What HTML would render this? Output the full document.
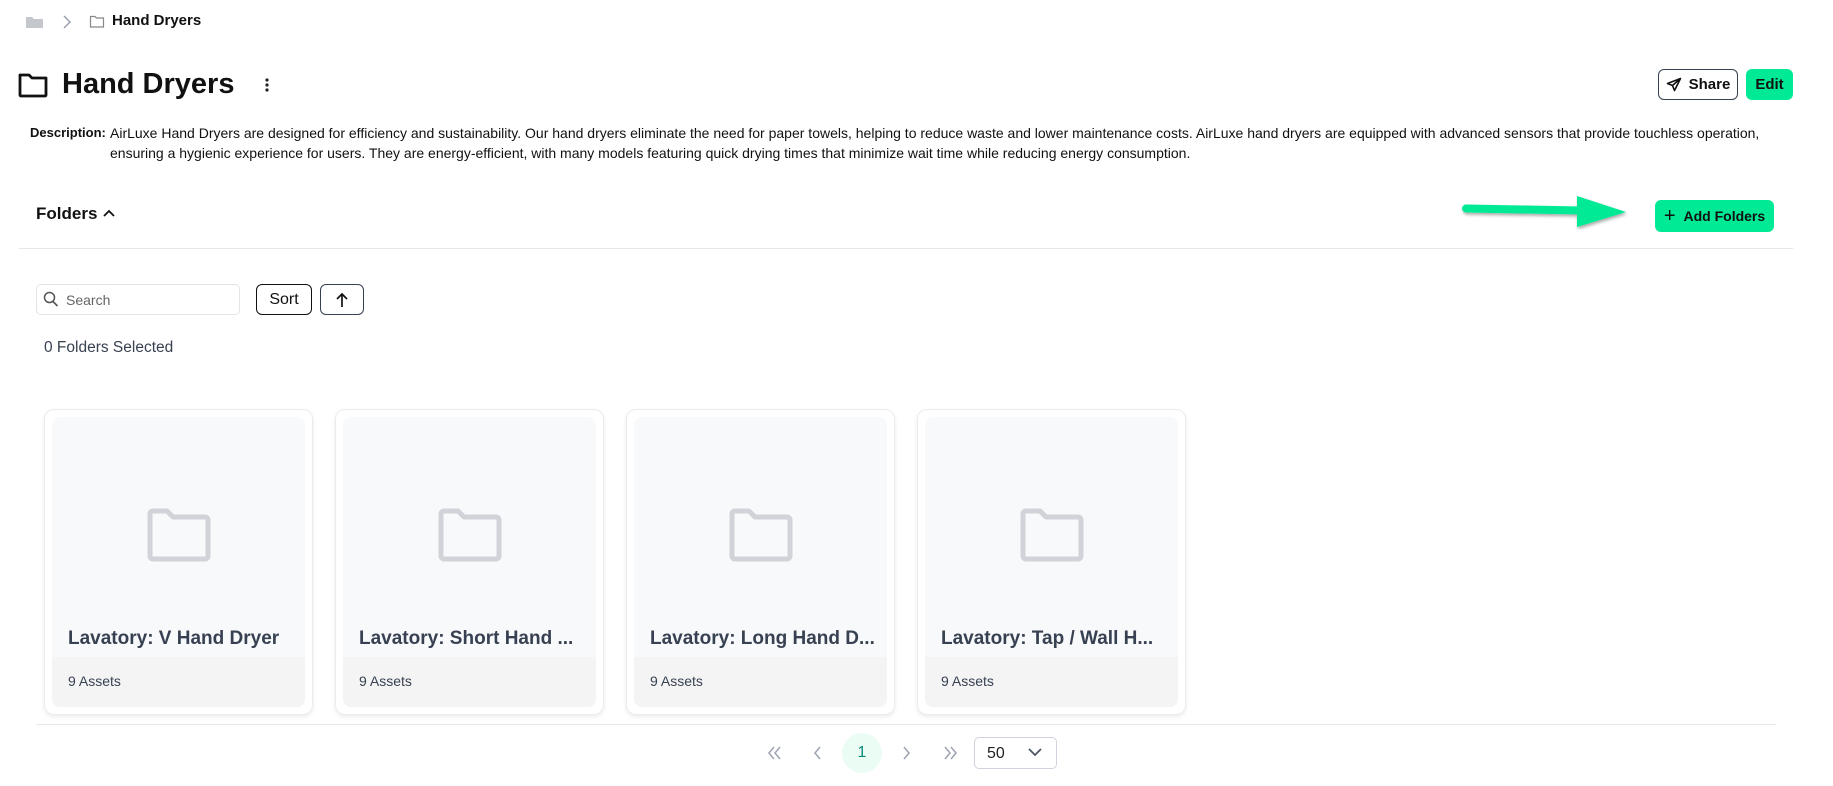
<!DOCTYPE html>
<html><head><meta charset="utf-8"><style>
*{box-sizing:border-box;margin:0;padding:0}
body{width:1833px;height:786px;background:#fff;font-family:"Liberation Sans",sans-serif;color:#111;position:relative;overflow:hidden}
.a{position:absolute}
.btn{position:absolute;border-radius:6px;font-weight:bold;font-size:15px;display:flex;align-items:center;justify-content:center}
.card{position:absolute;top:409px;width:269px;height:306px;background:#fff;border:1px solid #ececec;border-radius:10px;box-shadow:0 2px 4px rgba(0,0,0,.08)}
.in{position:absolute;left:7px;top:7px;right:7px;bottom:7px;border-radius:8px;background:#f8f9fb;overflow:hidden}
.ft{position:absolute;left:0;right:0;bottom:0;height:50px;background:#f4f4f5;font-size:14px;color:#374151;padding:16px 0 0 16px}
.tt{position:absolute;left:16px;top:211px;font-size:19px;font-weight:bold;color:#374151;white-space:nowrap}
.fi{position:absolute;left:94px;top:89px}
</style></head><body>
<svg class="a" style="left:25px;top:14px" width="20" height="16" viewBox="0 0 20 16"><path d="M1 3h6l2 2h9v9H1z" fill="#c4c7cc"/></svg>
<svg class="a" style="left:61px;top:13px" width="12" height="18" viewBox="0 0 12 18"><path d="M3 3l6 6-6 6" fill="none" stroke="#9ca3af" stroke-width="1.5"/></svg>
<svg class="a" style="left:89px;top:14px" width="16" height="15" viewBox="0 0 16 15"><path d="M1.5 2.5h4.5l1.5 1.5h7v9h-13z" fill="none" stroke="#888" stroke-width="1.2"/></svg>
<div class="a" style="left:112px;top:12px;font-size:15px;font-weight:bold">Hand Dryers</div>

<svg class="a" style="left:17px;top:70px" width="32" height="30" viewBox="0 0 32 30"><path d="M3 5h9l3 3h14v17a1 1 0 0 1-1 1H4a1 1 0 0 1-1-1z" fill="none" stroke="#111" stroke-width="2.8" stroke-linejoin="round"/></svg>
<div class="a" style="left:62px;top:68px;font-size:29px;font-weight:bold">Hand Dryers</div>
<svg class="a" style="left:263px;top:77px" width="8" height="16"><circle cx="4" cy="3" r="1.6" fill="#222"/><circle cx="4" cy="8" r="1.6" fill="#222"/><circle cx="4" cy="13" r="1.6" fill="#222"/></svg>

<div class="btn" style="left:1658px;top:69px;width:80px;height:31px;border:1.5px solid #374151;gap:7px"><svg width="16" height="16" viewBox="0 0 16 16"><path d="M14.5 1.5L1.5 6.5l5 2 2 5z M6.5 8.5l8-7" fill="none" stroke="#111" stroke-width="1.6" stroke-linejoin="round"/></svg>Share</div>
<div class="btn" style="left:1746px;top:69px;width:47px;height:31px;background:#00ea96">Edit</div>

<div class="a" style="left:30px;top:123px;font-size:14px;line-height:20px;width:1800px;white-space:nowrap">
<span style="font-weight:bold;position:absolute;left:0;top:0;font-size:13px">Description:</span>
<div style="margin-left:80px">AirLuxe Hand Dryers are designed for efficiency and sustainability. Our hand dryers eliminate the need for paper towels, helping to reduce waste and lower maintenance costs. AirLuxe hand dryers are equipped with advanced sensors that provide touchless operation,<br>ensuring a hygienic experience for users. They are energy-efficient, with many models featuring quick drying times that minimize wait time while reducing energy consumption.</div></div>

<div class="a" style="left:36px;top:204px;font-size:17px;font-weight:bold">Folders</div>
<svg class="a" style="left:102px;top:207px" width="14" height="14" viewBox="0 0 14 14"><path d="M2 9l5-5 5 5" fill="none" stroke="#111" stroke-width="1.8"/></svg>

<svg class="a" style="left:1452px;top:194px" width="180" height="36" viewBox="0 0 180 36"><defs><filter id="s"><feDropShadow dx="1" dy="2" stdDeviation="1.5" flood-opacity=".35"/></filter></defs><g filter="url(#s)"><path d="M14 14.5L130 16.5" stroke="#00ea96" stroke-width="8" stroke-linecap="round"/><path d="M125 2L174 18 125 33z" fill="#00ea96"/></g></svg>
<div class="btn" style="left:1655px;top:200px;width:119px;height:32px;background:#00ea96;font-size:14px;gap:8px"><span style="font-size:20px;font-weight:normal">+</span>Add Folders</div>

<div class="a" style="left:19px;top:248px;width:1774px;height:1px;background:#e5e7eb"></div>

<div class="a" style="left:36px;top:284px;width:204px;height:31px;border:1px solid #e2e4e8;border-radius:5px"></div>
<svg class="a" style="left:43px;top:291px" width="16" height="17" viewBox="0 0 16 17"><circle cx="6.5" cy="6.5" r="5" fill="none" stroke="#555" stroke-width="1.5"/><path d="M10 10.5l4.5 4.5" stroke="#555" stroke-width="1.6"/></svg>
<div class="a" style="left:66px;top:292px;font-size:14px;color:#666">Search</div>
<div class="btn" style="left:256px;top:284px;width:56px;height:31px;border:1.5px solid #111;font-weight:normal;font-size:16px">Sort</div>
<div class="btn" style="left:320px;top:284px;width:44px;height:31px;border:1.5px solid #374151"><svg width="14" height="16" viewBox="0 0 14 16"><path d="M7 15V2M2 7l5-5 5 5" fill="none" stroke="#111" stroke-width="1.7"/></svg></div>
<div class="a" style="left:44px;top:339px;font-size:15.5px;color:#374151">0 Folders Selected</div>

<div class="card" style="left:44px"><div class="in"><svg class="fi" width="66" height="56" viewBox="0 0 66 56"><path d="M4 8a3 3 0 0 1 3-3h14l6 6h32a3 3 0 0 1 3 3v36a3 3 0 0 1-3 3H7a3 3 0 0 1-3-3z" fill="none" stroke="#d1d3d9" stroke-width="5" stroke-linejoin="round"/></svg><div class="tt">Lavatory: V Hand Dryer</div><div class="ft">9 Assets</div></div></div>
<div class="card" style="left:335px"><div class="in"><svg class="fi" width="66" height="56" viewBox="0 0 66 56"><path d="M4 8a3 3 0 0 1 3-3h14l6 6h32a3 3 0 0 1 3 3v36a3 3 0 0 1-3 3H7a3 3 0 0 1-3-3z" fill="none" stroke="#d1d3d9" stroke-width="5" stroke-linejoin="round"/></svg><div class="tt">Lavatory: Short Hand ...</div><div class="ft">9 Assets</div></div></div>
<div class="card" style="left:626px"><div class="in"><svg class="fi" width="66" height="56" viewBox="0 0 66 56"><path d="M4 8a3 3 0 0 1 3-3h14l6 6h32a3 3 0 0 1 3 3v36a3 3 0 0 1-3 3H7a3 3 0 0 1-3-3z" fill="none" stroke="#d1d3d9" stroke-width="5" stroke-linejoin="round"/></svg><div class="tt">Lavatory: Long Hand D...</div><div class="ft">9 Assets</div></div></div>
<div class="card" style="left:917px"><div class="in"><svg class="fi" width="66" height="56" viewBox="0 0 66 56"><path d="M4 8a3 3 0 0 1 3-3h14l6 6h32a3 3 0 0 1 3 3v36a3 3 0 0 1-3 3H7a3 3 0 0 1-3-3z" fill="none" stroke="#d1d3d9" stroke-width="5" stroke-linejoin="round"/></svg><div class="tt">Lavatory: Tap / Wall H...</div><div class="ft">9 Assets</div></div></div>

<div class="a" style="left:36px;top:724px;width:1740px;height:1px;background:#e5e7eb"></div>

<svg class="a" style="left:766px;top:743px" width="300" height="20" viewBox="0 0 300 20">
<path d="M8 4l-5 6 5 6M14 4l-5 6 5 6" fill="none" stroke="#a0a7b3" stroke-width="1.6"/>
<path d="M54 4l-5 6 5 6" fill="none" stroke="#a0a7b3" stroke-width="1.6"/>
<path d="M138 4l5 6-5 6" fill="none" stroke="#a0a7b3" stroke-width="1.6"/>
<path d="M179 4l5 6-5 6M185 4l5 6-5 6" fill="none" stroke="#a0a7b3" stroke-width="1.6"/>
</svg>
<div class="a" style="left:842px;top:733px;width:40px;height:40px;border-radius:50%;background:#eafcf4;color:#0b8a7a;font-size:16px;text-align:center;line-height:40px">1</div>
<div class="a" style="left:974px;top:737px;width:83px;height:32px;border:1px solid #cfd4dc;border-radius:5px;font-size:16px;color:#222;padding:7px 0 0 12px">50</div>
<svg class="a" style="left:1027px;top:746px" width="16" height="12" viewBox="0 0 16 12"><path d="M2 3l6 6 6-6" fill="none" stroke="#4b5563" stroke-width="1.8"/></svg>
</body></html>
